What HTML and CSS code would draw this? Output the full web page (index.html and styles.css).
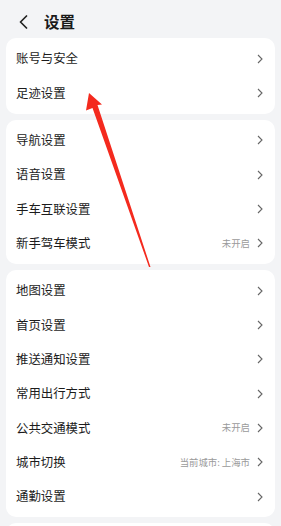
FILE: index.html
```html
<!DOCTYPE html>
<html lang="zh-CN">
<head>
<meta charset="utf-8">
<link rel="stylesheet" href="styles.css">
</head>
<body>
<div class="page">
  <header class="header">
    <svg class="back" width="9" height="14" viewBox="0 0 9 14"><polyline points="7.5,1 1.5,7 7.5,13" fill="none" stroke="#222" stroke-width="1.7" stroke-linecap="round" stroke-linejoin="round"/></svg>
    <h1 class="title">设置</h1>
  </header>

  <section class="card">
    <div class="row"><span class="label">账号与安全</span><span class="right"><svg class="chev" width="6" height="10" viewBox="0 0 6 10"><polyline points="1,1 5,5 1,9" fill="none" stroke="#666" stroke-width="1.1"/></svg></span></div>
    <div class="row"><span class="label">足迹设置</span><span class="right"><svg class="chev" width="6" height="10" viewBox="0 0 6 10"><polyline points="1,1 5,5 1,9" fill="none" stroke="#666" stroke-width="1.1"/></svg></span></div>
  </section>

  <section class="card">
    <div class="row"><span class="label">导航设置</span><span class="right"><svg class="chev" width="6" height="10" viewBox="0 0 6 10"><polyline points="1,1 5,5 1,9" fill="none" stroke="#666" stroke-width="1.1"/></svg></span></div>
    <div class="row"><span class="label">语音设置</span><span class="right"><svg class="chev" width="6" height="10" viewBox="0 0 6 10"><polyline points="1,1 5,5 1,9" fill="none" stroke="#666" stroke-width="1.1"/></svg></span></div>
    <div class="row"><span class="label">手车互联设置</span><span class="right"><svg class="chev" width="6" height="10" viewBox="0 0 6 10"><polyline points="1,1 5,5 1,9" fill="none" stroke="#666" stroke-width="1.1"/></svg></span></div>
    <div class="row"><span class="label">新手驾车模式</span><span class="right"><span class="value">未开启</span><svg class="chev" width="6" height="10" viewBox="0 0 6 10"><polyline points="1,1 5,5 1,9" fill="none" stroke="#666" stroke-width="1.1"/></svg></span></div>
  </section>

  <section class="card">
    <div class="row"><span class="label">地图设置</span><span class="right"><svg class="chev" width="6" height="10" viewBox="0 0 6 10"><polyline points="1,1 5,5 1,9" fill="none" stroke="#666" stroke-width="1.1"/></svg></span></div>
    <div class="row"><span class="label">首页设置</span><span class="right"><svg class="chev" width="6" height="10" viewBox="0 0 6 10"><polyline points="1,1 5,5 1,9" fill="none" stroke="#666" stroke-width="1.1"/></svg></span></div>
    <div class="row"><span class="label">推送通知设置</span><span class="right"><svg class="chev" width="6" height="10" viewBox="0 0 6 10"><polyline points="1,1 5,5 1,9" fill="none" stroke="#666" stroke-width="1.1"/></svg></span></div>
    <div class="row"><span class="label">常用出行方式</span><span class="right"><svg class="chev" width="6" height="10" viewBox="0 0 6 10"><polyline points="1,1 5,5 1,9" fill="none" stroke="#666" stroke-width="1.1"/></svg></span></div>
    <div class="row"><span class="label">公共交通模式</span><span class="right"><span class="value">未开启</span><svg class="chev" width="6" height="10" viewBox="0 0 6 10"><polyline points="1,1 5,5 1,9" fill="none" stroke="#666" stroke-width="1.1"/></svg></span></div>
    <div class="row"><span class="label">城市切换</span><span class="right"><span class="value">当前城市: 上海市</span><svg class="chev" width="6" height="10" viewBox="0 0 6 10"><polyline points="1,1 5,5 1,9" fill="none" stroke="#666" stroke-width="1.1"/></svg></span></div>
    <div class="row"><span class="label">通勤设置</span><span class="right"><svg class="chev" width="6" height="10" viewBox="0 0 6 10"><polyline points="1,1 5,5 1,9" fill="none" stroke="#666" stroke-width="1.1"/></svg></span></div>
  </section>

  <section class="card card-last"></section>

  <svg class="arrow" width="281" height="526" viewBox="0 0 281 526">
    <polygon points="89,93 102,104.5 97.5,105 150.5,267 149,267 92.5,108 86,110.5" fill="#f42a1e"/>
  </svg>
</div>
</body>
</html>
```

FILE: styles.css
```css
html, body {
  margin: 0;
  padding: 0;
}
body {
  background: #f3f4f6;
  font-family: "Noto Sans CJK SC", "Noto Sans", sans-serif;
  color: #1c1c1c;
  width: 281px;
  height: 526px;
  overflow: hidden;
}
.page {
  position: relative;
  height: 526px;
}
.header {
  height: 38px;
  display: flex;
  align-items: center;
  padding-left: 19px;
  padding-top: 6px;
  box-sizing: border-box;
}
.back {
  display: block;
}
.title {
  margin: 0 0 0 16px;
  font-size: 15.5px;
  font-weight: 700;
  line-height: 1;
  color: #1a1a1a;
}
.card {
  background: #fff;
  margin: 0 6px 6px;
  border-radius: 10px;
  padding: 3.5px 0;
}
.card-last {
  height: 20px;
}
.row {
  height: 34.33px;
  display: flex;
  align-items: center;
  justify-content: space-between;
  padding: 0 12px 0 10px;
}
.label {
  font-size: 12.4px;
  line-height: 1;
  color: #1c1c1c;
}
.right {
  display: flex;
  align-items: center;
}
.value {
  font-size: 9.4px;
  color: #9a9a9a;
  margin-right: 7px;
  line-height: 1;
}
.chev {
  display: block;
}
.arrow {
  position: absolute;
  left: 0;
  top: 0;
  pointer-events: none;
}
```
